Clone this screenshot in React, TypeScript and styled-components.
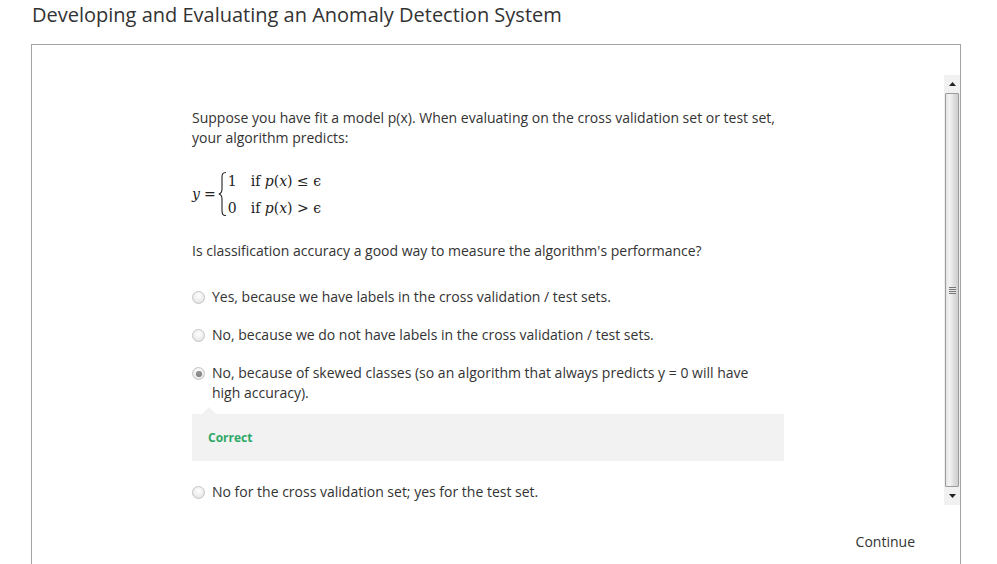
import React from "react";
import styled, { createGlobalStyle } from "styled-components";

const Global = createGlobalStyle`
  html, body { margin: 0; padding: 0; background: #fff; }
  body { font-family: "Open Sans", "Noto Sans", sans-serif; color: #333; overflow: hidden; }
`;

const Page = styled.div`
  padding: 0 0 0 31px;
  width: 930px;
`;

const Title = styled.h1`
  margin: 0;
  padding: 1px 0 0 1px;
  height: 43px;
  font-size: 20px;
  font-weight: 400;
  line-height: 27px;
  color: #333;
`;

const Frame = styled.div`
  border: 1px solid #a3a3a3;
  border-bottom: none;
  padding-top: 30px;
  height: 520px;
  box-sizing: border-box;
  display: flex;
  flex-direction: column;
`;

const Viewport = styled.div`
  display: flex;
  height: 430px;
`;

const Content = styled.div`
  flex: 1;
  display: flex;
  justify-content: center;
  padding-top: 33px;
`;

const Column = styled.div`
  width: 592px;
  font-size: 14px;
  line-height: 20px;
`;

const Para = styled.p`
  margin: 0;
  width: 590px;
`;

const Equation = styled.div`
  display: flex;
  align-items: center;
  margin: 23px 0 0 0;
  height: 46px;
  font-family: "DejaVu Serif", "Liberation Serif", serif;
  font-size: 14px;
  color: #222;
`;

const MathVar = styled.span`
  font-style: italic;
`;

const Lhs = styled.span`
  display: flex;
  gap: 4px;
  margin-right: 2px;
`;

const Cases = styled.div`
  display: grid;
  grid-template-columns: 23px auto;
  row-gap: 7px;
  line-height: 20px;
  margin-left: 1px;
`;

const Question = styled.p`
  margin: 24px 0 0 0;
`;

const Options = styled.div`
  margin-top: 26px;
  display: flex;
  flex-direction: column;
`;

const Option = styled.label<{ $gap?: number }>`
  display: flex;
  align-items: flex-start;
  margin-bottom: ${(p) => p.$gap ?? 18}px;
`;

const Radio = styled.span<{ $checked?: boolean }>`
  flex: none;
  width: 11px;
  height: 11px;
  border-radius: 50%;
  margin: 4px 7px 0 0;
  border: 1px solid #c4c4c4;
  background: radial-gradient(circle at 50% 35%, #ffffff 0%, #ececec 60%, #dcdcdc 100%);
  position: relative;
  &::after {
    content: "";
    display: ${(p) => (p.$checked ? "block" : "none")};
    position: absolute;
    left: 2.5px;
    top: 2.5px;
    width: 6px;
    height: 6px;
    border-radius: 50%;
    background: radial-gradient(circle at 50% 40%, #9a9a9a, #6f6f6f);
  }
`;

const OptionText = styled.span`
  width: 560px;
`;

const Feedback = styled.div`
  position: relative;
  background: #f2f2f2;
  height: 47px;
  box-sizing: border-box;
  padding: 14px 16px;
  margin-top: 11px;
  margin-bottom: 21px;
  font-size: 12px;
  font-weight: 700;
  color: #2ea866;
  &::before {
    content: "";
    position: absolute;
    left: 10px;
    top: -7px;
    border-left: 7px solid transparent;
    border-right: 7px solid transparent;
    border-bottom: 7px solid #f2f2f2;
  }
`;

const Scrollbar = styled.div`
  width: 16px;
  display: flex;
  flex-direction: column;
  background: #f0f0f0;
`;

const ScrollButton = styled.div`
  height: 18px;
  display: flex;
  align-items: center;
  justify-content: center;
  background: #f1f1f1;
`;

const Thumb = styled.div`
  flex: 1;
  margin: 0 1px;
  border: 1px solid #9c9c9c;
  border-radius: 1px;
  background: linear-gradient(to right, #e4e4e4 0%, #f3f3f3 30%, #dcdcdc 70%, #cfcfcf 100%);
  display: flex;
  align-items: center;
  justify-content: center;
`;

const Grip = styled.div`
  width: 7px;
  height: 7px;
  background: repeating-linear-gradient(to bottom, #777 0 1px, #e8e8e8 1px 2px);
`;

const Footer = styled.div`
  display: flex;
  justify-content: flex-end;
  padding: 27px 45px 0 0;
  font-size: 14px;
  line-height: 20px;
`;

const Arrow = ({ up }: { up?: boolean }) => (
  <svg width="7" height="4" viewBox="0 0 7 4">
    {up ? <polygon points="3.5,0 7,4 0,4" fill="#222" /> : <polygon points="0,0 7,0 3.5,4" fill="#222" />}
  </svg>
);

const Brace = () => (
  <svg width="9" height="46" viewBox="0 0 9 46">
    <path
      d="M8 1.5 C4.5 1.5 4 3 4 7 L4 18 C4 21 3 22.5 0.8 23 C3 23.5 4 25 4 28 L4 39 C4 43 4.5 44.5 8 44.5"
      fill="none"
      stroke="#222"
      strokeWidth="1.1"
    />
  </svg>
);

export default function App() {
  return (
    <>
      <Global />
      <Page>
        <Title>Developing and Evaluating an Anomaly Detection System</Title>
        <Frame>
          <Viewport>
            <Content>
              <Column>
                <Para>
                  Suppose you have fit a model p(x). When evaluating on the cross validation set or test set, your
                  algorithm predicts:
                </Para>
                <Equation>
                  <Lhs>
                    <MathVar>y</MathVar>
                    <span>=</span>
                  </Lhs>
                  <Brace />
                  <Cases>
                    <span>1</span>
                    <span>
                      if <MathVar>p</MathVar>(<MathVar>x</MathVar>) ≤ ϵ
                    </span>
                    <span>0</span>
                    <span>
                      if <MathVar>p</MathVar>(<MathVar>x</MathVar>) &gt; ϵ
                    </span>
                  </Cases>
                </Equation>
                <Question>Is classification accuracy a good way to measure the algorithm's performance?</Question>
                <Options>
                  <Option>
                    <Radio />
                    <OptionText>Yes, because we have labels in the cross validation / test sets.</OptionText>
                  </Option>
                  <Option>
                    <Radio />
                    <OptionText>No, because we do not have labels in the cross validation / test sets.</OptionText>
                  </Option>
                  <Option $gap={0}>
                    <Radio $checked />
                    <OptionText>
                      No, because of skewed classes (so an algorithm that always predicts y = 0 will have high
                      accuracy).
                    </OptionText>
                  </Option>
                  <Feedback>Correct</Feedback>
                  <Option>
                    <Radio />
                    <OptionText>No for the cross validation set; yes for the test set.</OptionText>
                  </Option>
                </Options>
              </Column>
            </Content>
            <Scrollbar>
              <ScrollButton>
                <Arrow up />
              </ScrollButton>
              <Thumb>
                <Grip />
              </Thumb>
              <ScrollButton>
                <Arrow />
              </ScrollButton>
            </Scrollbar>
          </Viewport>
          <Footer>Continue</Footer>
        </Frame>
      </Page>
    </>
  );
}
